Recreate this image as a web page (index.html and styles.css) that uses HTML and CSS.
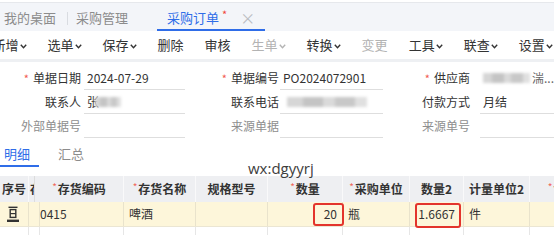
FILE: index.html
```html
<!DOCTYPE html>
<html lang="zh-CN">
<head>
<meta charset="utf-8">
<title>采购订单</title>
<link rel="stylesheet" href="styles.css">
</head>
<body>
<div class="page">
  <div class="tabbar">
    <div class="tab t1">我的桌面</div>
    <div class="tab-sep"></div>
    <div class="tab t2">采购管理</div>
    <div class="tab active">采购订单<span class="mod">*</span><span class="close">×</span></div>
  </div>

  <div class="toolbar">
    <div class="tb">新增<svg class="chev" width="7" height="5" viewBox="0 0 7 5"><path d="M0.8 0.8L3.5 3.7L6.2 0.8" fill="none" stroke="currentColor" stroke-width="1.4"/></svg></div>
    <div class="tb">选单<svg class="chev" width="7" height="5" viewBox="0 0 7 5"><path d="M0.8 0.8L3.5 3.7L6.2 0.8" fill="none" stroke="currentColor" stroke-width="1.4"/></svg></div>
    <div class="tb">保存<svg class="chev" width="7" height="5" viewBox="0 0 7 5"><path d="M0.8 0.8L3.5 3.7L6.2 0.8" fill="none" stroke="currentColor" stroke-width="1.4"/></svg></div>
    <div class="tb">删除</div>
    <div class="tsep"></div>
    <div class="tb">审核</div>
    <div class="tsep"></div>
    <div class="tb dis">生单<svg class="chev" width="7" height="5" viewBox="0 0 7 5"><path d="M0.8 0.8L3.5 3.7L6.2 0.8" fill="none" stroke="currentColor" stroke-width="1.4"/></svg></div>
    <div class="tb">转换<svg class="chev" width="7" height="5" viewBox="0 0 7 5"><path d="M0.8 0.8L3.5 3.7L6.2 0.8" fill="none" stroke="currentColor" stroke-width="1.4"/></svg></div>
    <div class="tsep"></div>
    <div class="tb dis">变更</div>
    <div class="tsep"></div>
    <div class="tb">工具<svg class="chev" width="7" height="5" viewBox="0 0 7 5"><path d="M0.8 0.8L3.5 3.7L6.2 0.8" fill="none" stroke="currentColor" stroke-width="1.4"/></svg></div>
    <div class="tb">联查<svg class="chev" width="7" height="5" viewBox="0 0 7 5"><path d="M0.8 0.8L3.5 3.7L6.2 0.8" fill="none" stroke="currentColor" stroke-width="1.4"/></svg></div>
    <div class="tb">设置<svg class="chev" width="7" height="5" viewBox="0 0 7 5"><path d="M0.8 0.8L3.5 3.7L6.2 0.8" fill="none" stroke="currentColor" stroke-width="1.4"/></svg></div>
  </div>

  <div class="form">
    <div class="frow">
      <div class="lab"><span class="star">*</span>单据日期</div>
      <div class="inp i1">2024-07-29</div>
      <div class="lab"><span class="star">*</span>单据编号</div>
      <div class="inp i2">PO2024072901</div>
      <div class="lab"><span class="star">*</span>供应商</div>
      <div class="inp i3 noline"><span class="blur b3"></span><span class="fade">湍...</span></div>
    </div>
    <div class="frow">
      <div class="lab">联系人</div>
      <div class="inp i1">张<span class="blur b1"></span></div>
      <div class="lab">联系电话</div>
      <div class="inp i2"><span class="blur b2"></span></div>
      <div class="lab">付款方式</div>
      <div class="inp i3">月结</div>
    </div>
    <div class="frow">
      <div class="lab muted">外部单据号</div>
      <div class="inp i1"></div>
      <div class="lab muted">来源单据</div>
      <div class="inp i2"></div>
      <div class="lab muted">来源单号</div>
      <div class="inp i3"></div>
    </div>
  </div>

  <div class="subtabs">
    <div class="st on">明细</div>
    <div class="st off">汇总</div>
  </div>

  <div class="grid">
    <div class="trow thead">
      <div class="c">序号</div>
      <div class="c clip">存货</div>
      <div class="c"><span class="rs">*</span>存货编码</div>
      <div class="c"><span class="rs">*</span>存货名称</div>
      <div class="c">规格型号</div>
      <div class="c"><span class="rs">*</span>数量</div>
      <div class="c"><span class="rs">*</span>采购单位</div>
      <div class="c">数量2</div>
      <div class="c">计量单位2</div>
      <div class="c"><span class="rs">*</span>含税单价</div>
    </div>
    <div class="trow tbody sel">
      <div class="c ico"><svg width="12" height="17" viewBox="0 0 12 17"><rect x="1.5" y="0.6" width="9" height="1.4" fill="#333"/><rect x="3.2" y="3.6" width="5.6" height="7.8" fill="none" stroke="#333" stroke-width="1.4"/><rect x="3.2" y="7" width="5.6" height="1.2" fill="#333"/><rect x="0" y="13.6" width="12" height="2.4" fill="#333"/></svg></div>
      <div class="c"></div>
      <div class="c">0415</div>
      <div class="c">啤酒</div>
      <div class="c"></div>
      <div class="c num n1">20<span class="mark m1"></span></div>
      <div class="c">瓶</div>
      <div class="c num n2">1.6667<span class="mark m2"></span></div>
      <div class="c">件</div>
      <div class="c"></div>
    </div>
    <div class="trow tbody">
      <div class="c"></div>
      <div class="c"></div>
      <div class="c"></div>
      <div class="c"></div>
      <div class="c"></div>
      <div class="c"></div>
      <div class="c"></div>
      <div class="c"></div>
      <div class="c"></div>
      <div class="c"></div>
    </div>
  </div>

  <div class="watermark">wx:dgyyrj</div>
</div>
</body>
</html>
```

FILE: styles.css
```css
* { box-sizing: border-box; margin: 0; padding: 0; }
html, body { width: 554px; height: 235px; overflow: hidden; background: #fff; }
body { font-family: "Noto Sans CJK SC", "Noto Sans", sans-serif; color: #333; }
.page { position: relative; width: 554px; height: 235px; overflow: hidden; }

/* top tabs */
.tabbar {
  margin-top: 2px;
  height: 29px;
  border-top: 1px solid #e6e8ec;
  background: #f3f5f9;
  display: flex;
  align-items: stretch;
  font-size: 13px;
}
.tab {
  display: flex;
  align-items: center;
  padding-top: 3px;
  line-height: 23px;
  color: #8c8c8c;
  border-bottom: 2px solid transparent;
  white-space: nowrap;
}
.t1 { padding-left: 4px; padding-right: 11px; }
.tab-sep { width: 1px; height: 13px; background: #d9dce1; align-self: center; margin-top: 2px; }
.t2 { padding-left: 8px; padding-right: 29px; }
.tab.active { color: #2f6de8; border-bottom-color: #2f6de8; padding-left: 10px; padding-right: 10px; }
.mod { color: #f0453a; font-size: 11px; margin-left: 3px; line-height: 1; transform: translateY(-3px); }
.close { color: #b9bcc2; font-size: 15px; margin-left: 13px; line-height: 1; }

/* toolbar */
.toolbar {
  height: 31px;
  margin-left: -18px;
  display: flex;
  align-items: center;
  font-size: 13px;
  border-bottom: 3px solid #eef0f3;
}
.tb { display: flex; align-items: center; padding: 0 10.5px; white-space: nowrap; line-height: 28px; color: #333; }
.tb .chev { margin-left: 1px; margin-top: 2px; }
.tb.dis { color: #b3b3b3; }
.tsep { width: 1px; height: 14px; background: #dfe1e5; }

/* form */
.form { padding-top: 4px; }
.frow {
  display: grid;
  grid-template-columns: 81px 104px 94px 104px 87px 1fr;
  height: 24px;
  font-size: 12px;
}
.lab { text-align: right; line-height: 24px; white-space: nowrap; color: #333; }
.lab.muted { color: #8e8e8e; }
.star { color: #f25a50; font-size: 11px; margin-right: 4px; }
.inp {
  border-bottom: 1px solid #dedede;
  line-height: 23px;
  padding-left: 3px;
  white-space: nowrap;
  overflow: hidden;
  color: #333;
  display: flex;
  align-items: center;
}
.inp.noline { border-bottom-color: transparent; }
.i1 { margin-left: 3px; }
.i2 { margin-left: 1px; }
.i3 { margin-left: 10px; }
.blur {
  display: inline-block;
  height: 10px;
  filter: blur(1.6px);
  background: linear-gradient(90deg, #d6d6d6 0 20%, #c4c4c4 20% 45%, #dadada 45% 60%, #c8c8c8 60% 85%, #e0e0e0 85%);
}
.b1 { width: 26px; margin-left: -4px; }
.b2 { width: 80px; margin-left: 4px; }
.b3 { width: 48px; margin-right: 2px; }
.fade { color: #666; }

/* sub tabs */
.subtabs { display: flex; margin-top: 5px; height: 24px; font-size: 13px; }
.st { line-height: 22px; border-bottom: 2px solid transparent; color: #8c8c8c; white-space: nowrap; }
.st.on { color: #2f6de8; border-bottom-color: #2f6de8; padding: 0 9px 0 4px; }
.st.off { margin-left: 19px; }

/* grid table */
.grid { margin-top: 9px; width: 620px; font-size: 12px; }
.trow {
  display: grid;
  grid-template-columns: 29px 6px 89px 72px 72px 75px 67px 54px 66px 90px;
}
.c {
  position: relative;
  border-right: 1px solid #e3e3e3;
  padding: 0 5px;
  white-space: nowrap;
  overflow: hidden;
}
.thead { height: 26px; background: #eeeff2; font-weight: 700; color: #333; }
.thead .c { line-height: 26px; text-align: center; border-right-color: #f9f9fa; padding: 0; }
.thead .c.clip { text-align: left; padding-left: 1px; border-right-color: #dcdcdc; }
.rs { color: #f0665c; font-size: 10px; font-weight: 400; margin-right: 1px; position: relative; top: -3px; }
.tbody { height: 25px; border-bottom: 1px solid #ebe6d3; }
.tbody .c { line-height: 24px; }
.sel { background: #fdf6da; }
.sel .c { border-right-color: #e9e3cc; }
.tbody:not(.sel) .c { border-right-color: #e6e6e6; }
.ico { display: flex; align-items: center; padding-left: 7px; }
.num { text-align: right; overflow: visible; }
.n1 { padding-right: 5px; }
.n2 { padding-right: 8px; }
.mark { position: absolute; border: 2px solid #e3342c; border-radius: 3px; }
.m1 { left: 45px; top: 1px; width: 31px; height: 23px; }
.m2 { left: 5px; top: 1px; width: 46px; height: 25px; }

.watermark {
  position: absolute;
  left: 248px;
  top: 161px;
  font-family: "Open Sans", "DejaVu Sans", sans-serif;
  font-size: 15px;
  line-height: 15px;
  color: #3d3d3d;
  z-index: 2;
}
```
